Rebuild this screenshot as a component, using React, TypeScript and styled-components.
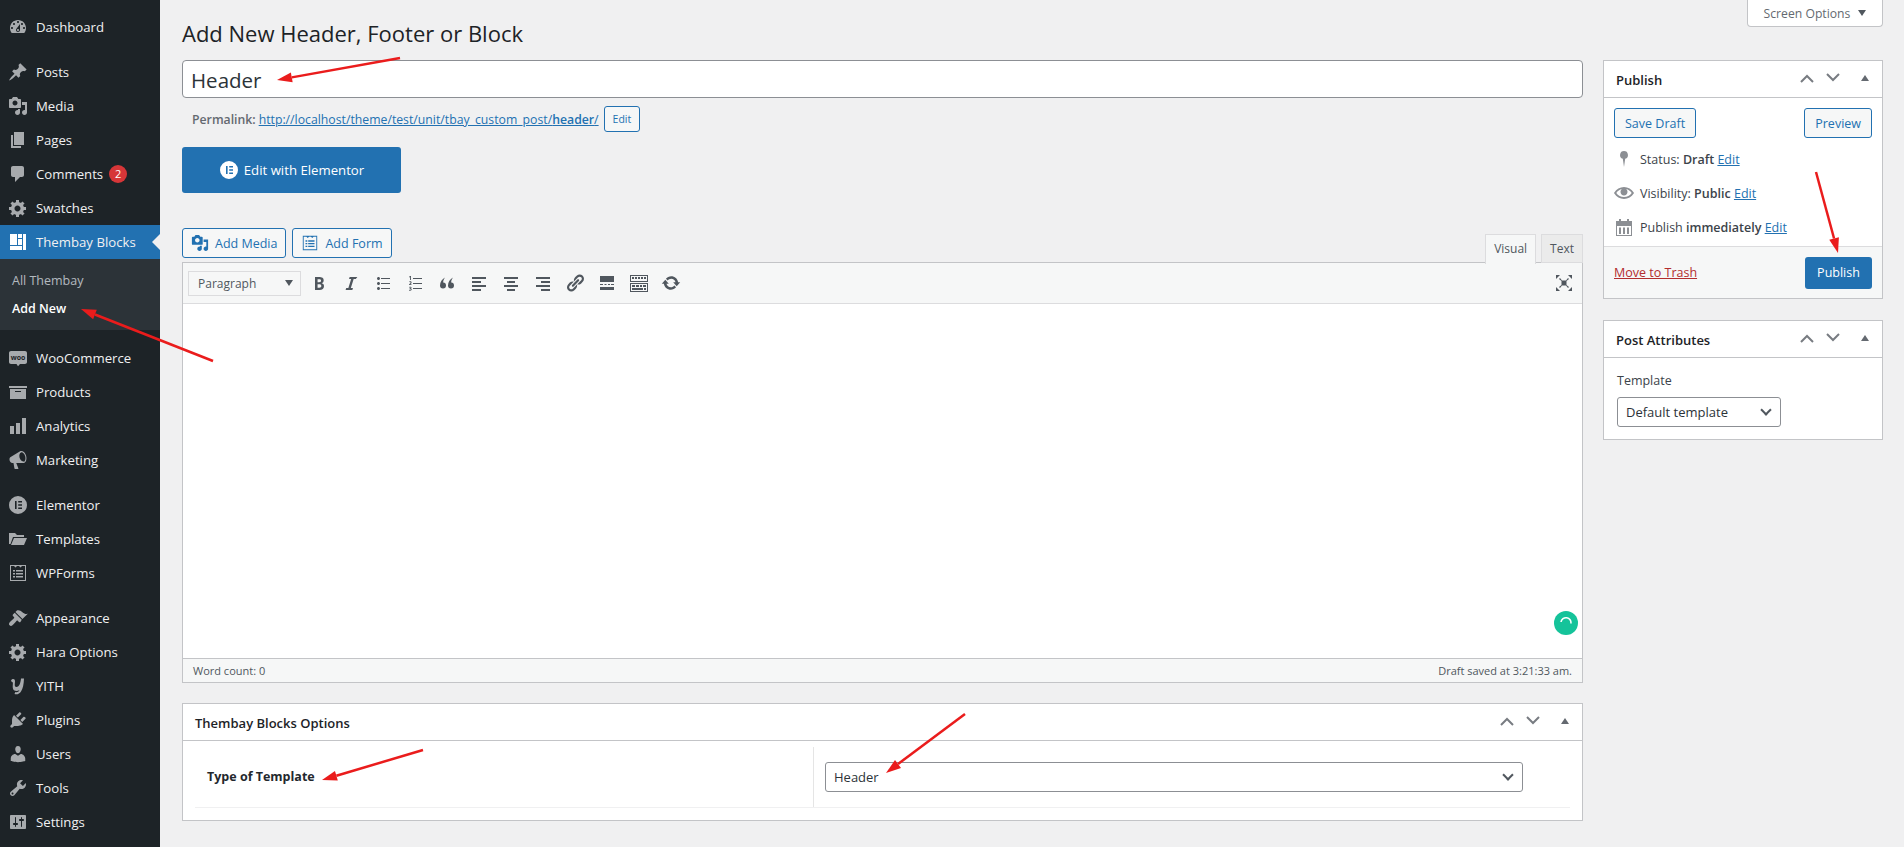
import React from 'react';
import styled, { createGlobalStyle } from 'styled-components';

const FONT = '"Open Sans", "Noto Sans", "Liberation Sans", sans-serif';

const GlobalStyle = createGlobalStyle`
  html, body {
    margin: 0;
    padding: 0;
    background: #f0f0f1;
    overflow: hidden;
  }
  body {
    font-family: ${FONT};
    font-size: 13px;
    color: #3c434a;
  }
  * {
    box-sizing: border-box;
  }
`;

const icons: Record<string, string> = {
  dashboard:
    'M3.76 16h12.48c1.1-1.37 1.76-3.11 1.76-5 0-4.42-3.58-8-8-8s-8 3.58-8 8c0 1.89.66 3.63 1.76 5zM10 4c.55 0 1 .45 1 1s-.45 1-1 1-1-.45-1-1 .45-1 1-1zM6 6c.55 0 1 .45 1 1s-.45 1-1 1-1-.45-1-1 .45-1 1-1zm8 0c.55 0 1 .45 1 1s-.45 1-1 1-1-.45-1-1 .45-1 1-1zm-5.37 5.55L12 7v6c0 1.1-.9 2-2 2s-2-.9-2-2c0-.57.24-1.08.63-1.45zM4 10c.55 0 1 .45 1 1s-.45 1-1 1-1-.45-1-1 .45-1 1-1zm12 0c.55 0 1 .45 1 1s-.45 1-1 1-1-.45-1-1 .45-1 1-1zm-5 3c0-.55-.45-1-1-1s-1 .45-1 1 .45 1 1 1 1-.45 1-1z',
  post: 'M10.44 3.02l1.82-1.82 6.36 6.35-1.83 1.82c-1.05-.68-2.48-.57-3.41.36l-.75.75c-.92.93-1.04 2.35-.35 3.41l-1.83 1.82-2.41-2.41-2.8 2.79c-.42.42-3.38 2.71-3.8 2.29s1.86-3.39 2.28-3.81l2.79-2.79L4.1 9.36l1.83-1.82c1.05.69 2.48.57 3.4-.36l.75-.75c.93-.92 1.05-2.35.36-3.41z',
  media:
    'M13 11V4c0-.55-.45-1-1-1h-1.67L9 1H5L3.67 3H2c-.55 0-1 .45-1 1v7c0 .55.45 1 1 1h10c.55 0 1-.45 1-1zM7 4.5c1.38 0 2.5 1.12 2.5 2.5S8.38 9.5 7 9.5 4.5 8.38 4.5 7 5.62 4.5 7 4.5zM14 6h5v10.5c0 1.38-1.12 2.5-2.5 2.5S14 17.88 14 16.5s1.12-2.5 2.5-2.5c.17 0 .34.02.5.05V9h-3V6zm-4 8.05V13h2v3.5c0 1.38-1.12 2.5-2.5 2.5S7 17.88 7 16.5 8.12 14 9.5 14c.17 0 .34.02.5.05z',
  page: 'M6 15V2h10v13H6zm-1 1h8v2H3V5h2v11z',
  comments: 'M5 2h9c1.1 0 2 .9 2 2v7c0 1.1-.9 2-2 2h-2l-5 5v-5H5c-1.1 0-2-.9-2-2V4c0-1.1.9-2 2-2z',
  generic:
    'M18 12h-2.18c-.17.7-.44 1.35-.81 1.93l1.54 1.54-2.1 2.1-1.54-1.54c-.58.36-1.23.63-1.91.79V19H8v-2.18c-.68-.16-1.33-.43-1.91-.79l-1.54 1.54-2.12-2.12 1.54-1.54c-.36-.58-.63-1.23-.79-1.91H1V9.03h2.17c.16-.7.44-1.35.8-1.94L2.43 5.55l2.1-2.1 1.54 1.54c.58-.37 1.24-.64 1.93-.81V2h3v2.18c.68.16 1.33.43 1.91.79l1.54-1.54 2.12 2.12-1.54 1.54c.36.59.64 1.24.8 1.94H18V12zm-8.5 1.5c1.66 0 3-1.34 3-3s-1.34-3-3-3-3 1.34-3 3 1.34 3 3 3z',
  blocks: 'M2 2h7v11H2zM10 2h4v4h-4zM10 7h4v6h-4zM15 2h3v16h-3zM2 14h12v4H2z',
  woo: 'M3 3h14c1.1 0 2 .9 2 2v9c0 1.1-.9 2-2 2h-5l-2 2.2L8.5 16H3c-1.1 0-2-.9-2-2V5c0-1.1.9-2 2-2z',
  archive: 'M19 4v2H1V4h18zM2 7h16v10H2V7zm11 3V9H7v1h6z',
  analytics: 'M18 18V2h-4v16h4zm-6 0V7H8v11h4zm-6 0v-8H2v8h4z',
  megaphone:
    'M18.15 5.94c.46 1.62.38 3.22-.02 4.48-.42 1.28-1.26 2.18-2.3 2.48-.16.06-.26.06-.4.06-.06.02-.12.02-.18.02-.06.02-.14.02-.22.02h-6.8l2.22 5.5c.02.14-.06.26-.14.34-.08.1-.24.16-.34.16H6.95c-.1 0-.26-.06-.34-.16-.08-.08-.16-.2-.14-.34l-1-5.5H4.25l-.02-.02c-.5.06-1.08-.18-1.54-.62s-.88-1.08-1.06-1.88c-.24-.8-.2-1.56-.02-2.2.18-.62.58-1.08 1.06-1.3l.02-.02 9-5.4c.1-.06.18-.1.24-.16.06-.04.14-.08.24-.12.16-.08.28-.12.5-.18 1.04-.3 2.24.1 3.22.98s1.84 2.24 2.26 3.86zm-2.58 5.98h-.02c.4-.1.74-.34 1.04-.7.58-.7.86-1.76.86-3.04-.02-.64-.1-1.3-.26-1.98-.34-1.2-.98-2.26-1.72-2.98-.76-.7-1.6-1.02-2.32-.82-.72.2-1.3.84-1.6 1.76-.3.88-.36 2.08-.02 3.3.34 1.24.98 2.26 1.74 2.98.76.7 1.6 1.02 2.3.88z',
  elementor:
    'M10 1a9 9 0 1 0 0 18 9 9 0 0 0 0-18zM7 6h1.6v8H7V6zm3.2 0H14v1.6h-3.8V6zm0 3.2H14v1.6h-3.8V9.2zm0 3.2H14V14h-3.8v-1.6z',
  folder: 'M1 4h6l2 2h7v2H5L2.5 15H1V4zm5 5h13l-3 7H3l3-7z',
  forms:
    'M2 2h16v16H2V2zm1 1v14h14V3h-3l-1.5 1.5L11 3H9L7.5 4.5 6 3H3zm2 4h2v1.5H5V7zm3 0h7v1.5H8V7zm-3 3h2v1.5H5V10zm3 0h7v1.5H8V10zm-3 3h2v1.5H5V13zm3 0h7v1.5H8V13z',
  appearance:
    'M14.48 11.06L7.41 3.99l1.5-1.5c.5-.56 2.3-.47 3.51.32 1.21.8 1.43 1.28 2.91 2.1 1.18.64 2.45 1.26 4.45.85zm-.71.71L6.7 4.7 4.93 6.47c-.39.39-.39 1.02 0 1.41l1.06 1.06c.39.39.39 1.03 0 1.42-.6.6-4.4 4.11-4.4 4.11-.78.78-.78 2.05 0 2.83.78.78 2.05.78 2.83 0 0 0 3.5-3.8 4.11-4.4.39-.39 1.03-.39 1.42 0l1.06 1.06c.39.39 1.02.39 1.41 0z',
  plugins:
    'M13.11 4.36L9.87 7.6 8 5.73l3.24-3.24c.35-.34 1.05-.2 1.56.32.52.51.66 1.21.31 1.55zm-8 1.77l.91-1.12 9.01 9.01-1.19.84c-.71.71-2.63 1.16-3.82 1.16H6.14L4.9 17.26c-.59.59-1.54.59-2.12 0-.59-.58-.59-1.53 0-2.12l1.24-1.24v-3.88c0-1.13.4-3.19 1.09-3.89zm7.26 3.97l3.24-3.24c.34-.35 1.04-.21 1.55.31.52.51.66 1.21.31 1.55l-3.24 3.25z',
  users:
    'M10 9.25c-2.27 0-2.73-3.44-2.73-3.44C7 4.02 7.82 2 9.97 2c2.16 0 2.98 2.02 2.71 3.81 0 0-.41 3.44-2.68 3.44zm0 2.57L12.72 10c2.39 0 4.52 2.33 4.52 4.53v2.49s-3.65 1.13-7.24 1.13c-3.65 0-7.24-1.13-7.24-1.13v-2.49c0-2.25 1.94-4.48 4.47-4.48z',
  tools:
    'M16.68 9.77c-1.34 1.34-3.3 1.67-4.95.99l-5.41 6.52c-.99.99-2.59.99-3.58 0s-.99-2.59 0-3.57l6.52-5.42c-.68-1.65-.35-3.61.99-4.95 1.28-1.28 3.12-1.62 4.72-1.06l-2.89 2.89 2.82 2.82 2.86-2.87c.53 1.58.18 3.39-1.08 4.65zM3.81 16.21c.4.39 1.04.39 1.43 0 .4-.4.4-1.04 0-1.43-.39-.4-1.03-.4-1.43 0-.39.39-.39 1.03 0 1.43z',
  settings:
    'M18 16V4c0-.55-.45-1-1-1H3c-.55 0-1 .45-1 1v12c0 .55.45 1 1 1h14c.55 0 1-.45 1-1zM8 11h1c.55 0 1 .45 1 1s-.45 1-1 1H8v1.5c0 .28-.22.5-.5.5s-.5-.22-.5-.5V13H6c-.55 0-1-.45-1-1s.45-1 1-1h1V5.5c0-.28.22-.5.5-.5s.5.22.5.5V11zm5-2h-1c-.55 0-1-.45-1-1s.45-1 1-1h1V5.5c0-.28.22-.5.5-.5s.5.22.5.5V7h1c.55 0 1 .45 1 1s-.45 1-1 1h-1v5.5c0 .28-.22.5-.5.5s-.5-.22-.5-.5V9z',
  pin: 'M10 2a4 4 0 0 0-1.2 7.8L10 18l1.2-8.2A4 4 0 0 0 10 2z',
  eye: 'M19.7 9.4C17.7 6 14 3.9 10 3.9S2.3 6 .3 9.4L0 10l.3.6c2 3.4 5.7 5.5 9.7 5.5s7.7-2.1 9.7-5.5l.3-.6-.3-.6zM10 14.1c-3.1 0-6-1.6-7.7-4.1C3.6 8 5.7 6.6 8 6.1c-.9.6-1.5 1.7-1.5 2.9 0 1.9 1.6 3.5 3.5 3.5s3.5-1.6 3.5-3.5c0-1.2-.6-2.3-1.5-2.9 2.3.5 4.4 1.9 5.7 3.9-1.7 2.5-4.6 4.1-7.7 4.1z',
  calendar:
    'M2 4h3V2h2v2h6V2h2v2h3v15H2V4zm1 5v9h14V9H3zm2 1.5h2V17H5v-6.5zm4 0h2V17H9v-6.5zm4 0h2V17h-2v-6.5z',
  bold: 'M6 4v13h4.54c1.37 0 2.46-.33 3.26-1 .8-.66 1.2-1.58 1.2-2.77 0-.84-.17-1.51-.51-2.01s-.9-.85-1.67-1.03v-.09c.57-.1 1.02-.4 1.36-.9s.51-1.13.51-1.91c0-1.14-.39-1.98-1.17-2.5C12.75 4.26 11.5 4 9.78 4H6zm2.57 5.15V6.26h1.36c.73 0 1.27.11 1.61.32.34.22.51.58.51 1.07 0 .54-.16.92-.47 1.15s-.82.35-1.51.35h-1.5zm0 2.19h1.6c1.44 0 2.16.53 2.16 1.61 0 .6-.17 1.05-.51 1.34s-.86.43-1.57.43H8.57v-3.38z',
  italic: 'M14.78 6h-2.13l-2.8 9h2.12l-.62 2H4.6l.62-2h2.14l2.8-9H8.03l.62-2h7.75z',
  ul: 'M5.5 7C4.67 7 4 6.33 4 5.5 4 4.68 4.67 4 5.5 4 6.32 4 7 4.68 7 5.5 7 6.33 6.32 7 5.5 7zM8 5h9v1H8V5zm-2.5 7c-.83 0-1.5-.67-1.5-1.5C4 9.68 4.67 9 5.5 9c.82 0 1.5.68 1.5 1.5 0 .83-.68 1.5-1.5 1.5zM8 10h9v1H8v-1zm-2.5 7c-.83 0-1.5-.67-1.5-1.5 0-.82.67-1.5 1.5-1.5.82 0 1.5.68 1.5 1.5 0 .83-.68 1.5-1.5 1.5zM8 15h9v1H8v-1z',
  ol: 'M6 7V3h-.69L4 3.8v.7l1.1-.6V7H6zm2-2h9v1H8V5zM6.5 12H4v-.6c1.2-1 1.6-1.5 1.6-1.9 0-.3-.2-.5-.6-.5-.3 0-.6.1-.9.3L4 8.7c.3-.2.8-.4 1.2-.4.9 0 1.4.5 1.4 1.1 0 .6-.5 1.2-1.3 1.9h1.2v.7zM8 10h9v1H8v-1zM4 16.6c.3.2.7.3 1 .3.4 0 .7-.2.7-.5 0-.4-.4-.5-.8-.5h-.3v-.6h.3c.3 0 .7-.1.7-.5 0-.2-.2-.4-.5-.4-.3 0-.6.1-.9.3l-.1-.7c.3-.2.8-.3 1.2-.3.8 0 1.2.4 1.2 1 0 .4-.2.7-.6.9.5.1.8.5.8 1 0 .7-.6 1.1-1.5 1.1-.4 0-.9-.1-1.2-.3zM8 15h9v1H8v-1z',
  quote:
    'M9 12.5a3 3 0 1 1-6 0c0-3.5 2-6.5 5-8-1.2 1.7-1.8 3-1.8 5A3 3 0 0 1 9 12.5zM17 12.5a3 3 0 1 1-6 0c0-3.5 2-6.5 5-8-1.2 1.7-1.8 3-1.8 5a3 3 0 0 1 2.8 3z',
  alignLeft: 'M3 4h14v2H3zM3 8h9v2H3zM3 12h14v2H3zM3 16h9v2H3z',
  alignCenter: 'M3 4h14v2H3zM6 8h8v2H6zM3 12h14v2H3zM6 16h8v2H6z',
  alignRight: 'M3 4h14v2H3zM8 8h9v2H8zM3 12h14v2H3zM8 16h9v2H8z',
  link: 'M17.74 2.76c1.68 1.69 1.68 4.41 0 6.1l-1.53 1.52c-1.12 1.12-2.7 1.47-4.14 1.09l2.62-2.61.76-.77.76-.76c.84-.84.84-2.2 0-3.04-.84-.85-2.2-.85-3.04 0l-.77.76-3.38 3.38c-.37-1.44-.02-3.02 1.1-4.14l1.52-1.53c1.69-1.68 4.42-1.68 6.1 0zM8.59 13.43l5.34-5.34c.42-.42.42-1.1 0-1.52-.44-.43-1.13-.39-1.53 0l-5.33 5.34c-.42.42-.42 1.1 0 1.52.44.43 1.13.39 1.52 0zm-.76 2.29l4.14-4.15c.38 1.44.03 3.02-1.09 4.14l-1.52 1.53c-1.69 1.68-4.41 1.68-6.1 0-1.68-1.68-1.68-4.42 0-6.1l1.53-1.52c1.12-1.12 2.7-1.47 4.14-1.1l-4.14 4.15c-.85.84-.85 2.2 0 3.05.84.84 2.2.84 3.04 0z',
  more: 'M3 3h14v6H3zM3 11h3v1H3zM7.5 11h2v1h-2zM11 11h2v1h-2zM14 11h3v1h-3zM3 14h14v3H3z',
  sink: 'M1 2h18v7H1V2zm1 1v5h16V3H2zm1 1h2v2H3zm3 0h2v2H6zm3 0h2v2H9zm3 0h2v2h-2zm3 0h2v2h-2zM1 10h18v9H1v-9zm1 1v7h16v-7H2zm1 1h3v2H3zm4 0h3v2H7zm4 0h2v2h-2zm3 0h3v2h-3zM3 15h11v2H3zm12 0h2v2h-2z',
  refresh:
    'M10.2 3.28c3.53 0 6.43 2.61 6.92 6h2.08l-3.5 4-3.5-4h2.32c-.45-1.97-2.21-3.45-4.32-3.45-1.45 0-2.73.71-3.54 1.78L4.95 5.66C6.23 4.2 8.11 3.28 10.2 3.28zm-.4 13.44c-3.52 0-6.43-2.61-6.92-6H.8l3.5-4c1.17 1.33 2.33 2.67 3.5 4H5.48c.45 1.97 2.21 3.45 4.32 3.45 1.45 0 2.73-.71 3.54-1.78l1.71 1.95c-1.28 1.46-3.15 2.38-5.25 2.38z',
  expand:
    'M2 2h4L2 6zM18 2h-4l4 4zM2 18h4l-4-4zM18 18h-4l4-4zM6 5l2 2.5h4L14 5l1 1-2.5 2v4l2.5 2-1 1-2-2.5H8L6 15l-1-1 2.5-2V8L5 6z',
  yith: 'M3 4.5C4.5 2.5 7 2.5 7 5.5c0 2-1 5.5 1.5 5.5 2.8 0 4-4 4.5-8.500h3c-.3 6-1 10-3 13-1.5 2.300-4 3.500-6.500 2.500l.8-2c1.800.8 3.300-.2 4.200-2-1 .7-2 1-3 1-3.500 0-4-3-3.700-6 .2-2 .2-3.300-1-3z',
};

interface NavEntry {
  label: string;
  icon: string;
  gap?: boolean;
  badge?: string;
  current?: boolean;
}

const navEntries: NavEntry[] = [
  { label: 'Dashboard', icon: 'dashboard' },
  { label: 'Posts', icon: 'post', gap: true },
  { label: 'Media', icon: 'media' },
  { label: 'Pages', icon: 'page' },
  { label: 'Comments', icon: 'comments', badge: '2' },
  { label: 'Swatches', icon: 'generic' },
  { label: 'Thembay Blocks', icon: 'blocks', current: true },
  { label: 'WooCommerce', icon: 'woo', gap: true },
  { label: 'Products', icon: 'archive' },
  { label: 'Analytics', icon: 'analytics' },
  { label: 'Marketing', icon: 'megaphone' },
  { label: 'Elementor', icon: 'elementor', gap: true },
  { label: 'Templates', icon: 'folder' },
  { label: 'WPForms', icon: 'forms' },
  { label: 'Appearance', icon: 'appearance', gap: true },
  { label: 'Hara Options', icon: 'generic' },
  { label: 'YITH', icon: 'yith' },
  { label: 'Plugins', icon: 'plugins' },
  { label: 'Users', icon: 'users' },
  { label: 'Tools', icon: 'tools' },
  { label: 'Settings', icon: 'settings' },
];

const toolbarIcons = ['bold', 'italic', 'ul', 'ol', 'quote', 'alignLeft', 'alignCenter', 'alignRight', 'link', 'more', 'sink', 'refresh'];

const Icon = ({ name, size = 20, className }: { name: string; size?: number; className?: string }) => (
  <svg className={className} width={size} height={size} viewBox="0 0 20 20" fill="currentColor" fillRule="evenodd" aria-hidden="true">
    <path d={icons[name]} />
  </svg>
);

const MenuIcon = ({ name }: { name: string }) => {
  if (name === 'woo') {
    return (
      <svg width={20} height={20} viewBox="0 0 20 20" aria-hidden="true">
        <path d={icons.woo} fill="currentColor" />
        <text x="10" y="11.5" textAnchor="middle" fontSize="7" fontWeight="700" fill="#1d2327" fontFamily={FONT}>
          woo
        </text>
      </svg>
    );
  }
  return <Icon name={name} />;
};

const HandleButtons = () => (
  <Handles>
    <svg width={16} height={12} viewBox="0 0 16 12" fill="none" stroke="currentColor" strokeWidth="2" aria-hidden="true">
      <path d="M2 10l6-6 6 6" />
    </svg>
    <svg width={16} height={12} viewBox="0 0 16 12" fill="none" stroke="currentColor" strokeWidth="2" aria-hidden="true">
      <path d="M2 2l6 6 6-6" />
    </svg>
    <HandleCaret />
  </Handles>
);

const RedArrow = ({ x1, y1, x2, y2 }: { x1: number; y1: number; x2: number; y2: number }) => {
  const angle = Math.atan2(y2 - y1, x2 - x1);
  const back = 15;
  const spread = 5;
  const bx = x2 - back * Math.cos(angle);
  const by = y2 - back * Math.sin(angle);
  const px = spread * Math.sin(angle);
  const py = spread * Math.cos(angle);
  return (
    <g>
      <line x1={x1} y1={y1} x2={bx} y2={by} stroke="#ea1c1c" strokeWidth="2.5" />
      <polygon points={`${x2},${y2} ${bx + px},${by - py} ${bx - px},${by + py}`} fill="#ea1c1c" />
    </g>
  );
};

export default function App() {
  return (
    <Page>
      <GlobalStyle />
      <Sidebar>
        {navEntries.map((entry) => (
          <React.Fragment key={entry.label}>
            <MenuItem $gap={entry.gap} $current={entry.current}>
              <MenuIconBox $current={entry.current}>
                <MenuIcon name={entry.icon} />
              </MenuIconBox>
              <span>{entry.label}</span>
              {entry.badge && <Badge>{entry.badge}</Badge>}
              {entry.current && <CurrentNotch />}
            </MenuItem>
            {entry.current && (
              <SubMenu>
                <SubItem>All Thembay</SubItem>
                <SubItem $active>Add New</SubItem>
              </SubMenu>
            )}
          </React.Fragment>
        ))}
      </Sidebar>

      <Main>
        <TopRow>
          <Title>Add New Header, Footer or Block</Title>
          <ScreenOptions>
            Screen Options <Caret />
          </ScreenOptions>
        </TopRow>

        <Columns>
          <EditorColumn>
            <TitleInput>Header</TitleInput>
            <PermalinkRow>
              <strong>Permalink:</strong>
              <TextLink href="#">
                http://localhost/theme/test/unit/tbay_custom_post/<b>header</b>/
              </TextLink>
              <OutlineButton $small>Edit</OutlineButton>
            </PermalinkRow>

            <ElementorButton>
              <Icon name="elementor" size={20} />
              Edit with Elementor
            </ElementorButton>

            <MediaRow>
              <MediaButtons>
                <OutlineButton>
                  <Icon name="media" size={18} />
                  Add Media
                </OutlineButton>
                <OutlineButton>
                  <Icon name="forms" size={18} />
                  Add Form
                </OutlineButton>
              </MediaButtons>
              <Tabs>
                <Tab $active>Visual</Tab>
                <Tab>Text</Tab>
              </Tabs>
            </MediaRow>

            <EditorBox>
              <Toolbar>
                <FormatSelect>
                  Paragraph
                  <Caret />
                </FormatSelect>
                <ToolIcons>
                  {toolbarIcons.map((name) => (
                    <ToolIcon key={name}>
                      <Icon name={name} />
                    </ToolIcon>
                  ))}
                </ToolIcons>
                <FullscreenIcon>
                  <Icon name="expand" />
                </FullscreenIcon>
              </Toolbar>
              <EditorArea>
                <Grammarly>
                  <svg width={14} height={14} viewBox="0 0 14 14" fill="none" stroke="#fff" strokeWidth="1.6" aria-hidden="true">
                    <path d="M2 6a5 5 0 0 1 10 1.500" />
                  </svg>
                </Grammarly>
              </EditorArea>
              <StatusBar>
                <span>Word count: 0</span>
                <span>Draft saved at 3:21:33 am.</span>
              </StatusBar>
            </EditorBox>

            <OptionsBox>
              <BoxHeader>
                <BoxTitle>Thembay Blocks Options</BoxTitle>
                <HandleButtons />
              </BoxHeader>
              <OptionsBody>
                <OptionsRow>
                  <OptionLabel>Type of Template</OptionLabel>
                  <OptionField>
                    <SelectBox $wide>
                      Header
                      <SelectChevron />
                    </SelectBox>
                  </OptionField>
                </OptionsRow>
              </OptionsBody>
            </OptionsBox>
          </EditorColumn>

          <SideColumn>
            <SideBox>
              <BoxHeader>
                <BoxTitle>Publish</BoxTitle>
                <HandleButtons />
              </BoxHeader>
              <DraftActions>
                <OutlineButton $tall>Save Draft</OutlineButton>
                <OutlineButton $tall>Preview</OutlineButton>
              </DraftActions>
              <MiscList>
                <MiscRow>
                  <Icon name="pin" />
                  <span>
                    Status: <b>Draft</b> <TextLink href="#">Edit</TextLink>
                  </span>
                </MiscRow>
                <MiscRow>
                  <Icon name="eye" />
                  <span>
                    Visibility: <b>Public</b> <TextLink href="#">Edit</TextLink>
                  </span>
                </MiscRow>
                <MiscRow>
                  <Icon name="calendar" />
                  <span>
                    Publish <b>immediately</b> <TextLink href="#">Edit</TextLink>
                  </span>
                </MiscRow>
              </MiscList>
              <PublishFooter>
                <TrashLink href="#">Move to Trash</TrashLink>
                <PublishButton>Publish</PublishButton>
              </PublishFooter>
            </SideBox>

            <SideBox>
              <BoxHeader>
                <BoxTitle>Post Attributes</BoxTitle>
                <HandleButtons />
              </BoxHeader>
              <AttributesBody>
                <AttributeLabel>Template</AttributeLabel>
                <SelectBox>
                  Default template
                  <SelectChevron />
                </SelectBox>
              </AttributesBody>
            </SideBox>
          </SideColumn>
        </Columns>
      </Main>

      <ArrowLayer width={1904} height={847} aria-hidden="true">
        <RedArrow x1={400} y1={58} x2={277} y2={80} />
        <RedArrow x1={213} y1={361} x2={81} y2={309} />
        <RedArrow x1={1816} y1={172} x2={1838} y2={253} />
        <RedArrow x1={423} y1={750} x2={322} y2={780} />
        <RedArrow x1={965} y1={714} x2={886} y2={773} />
      </ArrowLayer>
    </Page>
  );
}

const Page = styled.div`
  position: relative;
  display: flex;
  width: 1904px;
  height: 847px;
  overflow: hidden;
  background: #f0f0f1;
`;

const ArrowLayer = styled.svg`
  position: absolute;
  inset: 0;
  pointer-events: none;
`;

const Sidebar = styled.nav`
  flex: 0 0 160px;
  padding-top: 10px;
  background: #1d2327;
`;

const MenuItem = styled.div<{ $gap?: boolean; $current?: boolean }>`
  position: relative;
  display: flex;
  align-items: center;
  height: 34px;
  margin-top: ${(p) => (p.$gap ? '11px' : '0')};
  padding-right: 8px;
  font-size: 13.2px;
  color: #f0f0f1;
  background: ${(p) => (p.$current ? '#2271b1' : 'transparent')};
`;

const MenuIconBox = styled.span<{ $current?: boolean }>`
  flex: 0 0 36px;
  display: flex;
  justify-content: center;
  color: ${(p) => (p.$current ? '#fff' : '#a7aaad')};
`;

const Badge = styled.span`
  display: inline-block;
  width: 18px;
  height: 18px;
  margin-left: 6px;
  border-radius: 50%;
  font-size: 11px;
  line-height: 18px;
  text-align: center;
  color: #fff;
  background: #d63638;
`;

const CurrentNotch = styled.span`
  position: absolute;
  top: 50%;
  right: 0;
  margin-top: -8px;
  border: 8px solid transparent;
  border-right-color: #f0f0f1;
`;

const SubMenu = styled.div`
  height: 71px;
  padding: 8px 0;
  background: #2c3338;
`;

const SubItem = styled.div<{ $active?: boolean }>`
  height: 28px;
  padding-left: 12px;
  font-size: 12.5px;
  line-height: 28px;
  font-weight: ${(p) => (p.$active ? 600 : 400)};
  color: ${(p) => (p.$active ? '#fff' : 'rgba(240, 246, 252, 0.7)')};
`;

const Main = styled.main`
  flex: 1;
  padding: 0 21px 0 22px;
`;

const TopRow = styled.header`
  display: flex;
  justify-content: space-between;
  align-items: flex-start;
  height: 60px;
`;

const Title = styled.h1`
  margin: 17px 0 0;
  font-size: 22px;
  font-weight: 400;
  line-height: 32px;
  color: #1d2327;
`;

const ScreenOptions = styled.div`
  display: flex;
  align-items: center;
  justify-content: center;
  gap: 8px;
  width: 136px;
  height: 27px;
  border: 1px solid #c3c4c7;
  border-top: 0;
  border-radius: 0 0 4px 4px;
  font-size: 12.2px;
  color: #646970;
  background: #fff;
`;

const Caret = styled.span`
  border: 4px solid transparent;
  border-top: 6px solid #50575e;
  border-bottom: 0;
`;

const Columns = styled.div`
  display: flex;
  gap: 20px;
`;

const EditorColumn = styled.div`
  flex: 1;
  min-width: 0;
`;

const SideColumn = styled.aside`
  flex: 0 0 280px;
  display: flex;
  flex-direction: column;
  gap: 21px;
`;

const TitleInput = styled.div`
  height: 38px;
  padding-left: 8px;
  border: 1px solid #8c8f94;
  border-radius: 4px;
  font-size: 20.5px;
  line-height: 38px;
  color: #2c3338;
  background: #fff;
`;

const PermalinkRow = styled.div`
  display: flex;
  align-items: center;
  height: 26px;
  margin-top: 8px;
  padding-left: 10px;
  font-size: 12.25px;
  color: #646970;

  strong {
    font-weight: 600;
    margin-right: 3px;
  }
`;

const TextLink = styled.a`
  color: #2271b1;
  text-decoration: underline;

  b {
    font-weight: 600;
  }
`;

const OutlineButton = styled.div<{ $small?: boolean; $tall?: boolean }>`
  display: inline-flex;
  align-items: center;
  gap: 6px;
  height: ${(p) => (p.$small ? '26px' : '30px')};
  margin-left: ${(p) => (p.$small ? '5px' : '0')};
  padding: 0 ${(p) => (p.$small ? '8px' : p.$tall ? '10px' : '8px')};
  border: 1px solid #2271b1;
  border-radius: 3px;
  font-size: ${(p) => (p.$small ? '10.5px' : '12.5px')};
  color: #2271b1;
  background: #f6f7f7;
  white-space: nowrap;
`;

const ElementorButton = styled.div`
  display: flex;
  align-items: center;
  justify-content: center;
  gap: 5px;
  width: 219px;
  height: 46px;
  margin-top: 15px;
  border-radius: 3px;
  font-size: 13.2px;
  color: #fff;
  background: #2271b1;
`;

const MediaRow = styled.div`
  display: flex;
  justify-content: space-between;
  height: 35px;
  margin-top: 35px;
`;

const MediaButtons = styled.div`
  display: flex;
  gap: 6px;
  height: 30px;
`;

const Tabs = styled.div`
  display: flex;
  align-items: flex-end;
  gap: 5px;
`;

const Tab = styled.div<{ $active?: boolean }>`
  position: relative;
  z-index: 1;
  height: ${(p) => (p.$active ? '30px' : '29px')};
  margin-bottom: ${(p) => (p.$active ? '-1px' : '0')};
  padding: 0 8px;
  border: 1px solid #dcdcde;
  border-bottom-width: ${(p) => (p.$active ? '0' : '1px')};
  font-size: 12px;
  line-height: 28px;
  color: #50575e;
  background: ${(p) => (p.$active ? '#f6f7f7' : '#ebebeb')};
`;

const EditorBox = styled.section`
  margin-top: -1px;
  border: 1px solid #c3c4c7;
  background: #fff;
`;

const Toolbar = styled.div`
  display: flex;
  align-items: center;
  height: 41px;
  padding: 0 8px 0 5px;
  border-bottom: 1px solid #dcdcde;
  background: #f6f7f7;
`;

const FormatSelect = styled.div`
  display: flex;
  align-items: center;
  justify-content: space-between;
  width: 113px;
  height: 25px;
  padding: 0 7px 0 9px;
  border: 1px solid #dcdcde;
  font-size: 12px;
  color: #50575e;
  background: #f6f7f7;
`;

const ToolIcons = styled.div`
  display: flex;
  flex: 1;
  margin-left: 2px;
`;

const ToolIcon = styled.span`
  flex: 0 0 32px;
  display: flex;
  justify-content: center;
  color: #50575e;
`;

const FullscreenIcon = styled.span`
  display: flex;
  color: #50575e;
`;

const EditorArea = styled.div`
  position: relative;
  height: 354px;
`;

const Grammarly = styled.div`
  position: absolute;
  right: 4px;
  bottom: 23px;
  display: flex;
  align-items: center;
  justify-content: center;
  width: 24px;
  height: 24px;
  border-radius: 50%;
  background: #15c39a;
`;

const StatusBar = styled.div`
  display: flex;
  justify-content: space-between;
  align-items: center;
  height: 24px;
  padding: 0 10px;
  border-top: 1px solid #c3c4c7;
  font-size: 11px;
  color: #50575e;
  background: #f6f7f7;
`;

const OptionsBox = styled.section`
  height: 118px;
  margin-top: 20px;
  border: 1px solid #c3c4c7;
  background: #fff;
`;

const SideBox = styled.section`
  border: 1px solid #c3c4c7;
  background: #fff;
`;

const BoxHeader = styled.div`
  display: flex;
  justify-content: space-between;
  align-items: center;
  height: 37px;
  padding-left: 12px;
  border-bottom: 1px solid #c3c4c7;
`;

const BoxTitle = styled.h2`
  margin: 0;
  padding-top: 1px;
  font-size: 13px;
  font-weight: 600;
  color: #1d2327;
`;

const Handles = styled.div`
  display: flex;
  align-items: center;
  gap: 10px;
  margin-top: -2px;
  padding-right: 13px;
  color: #787c82;
`;

const HandleCaret = styled.span`
  margin-left: 10px;
  border: 4px solid transparent;
  border-top: 0;
  border-bottom: 6px solid #646970;
`;

const OptionsBody = styled.div`
  padding: 6px 12px 0;
`;

const OptionsRow = styled.div`
  display: grid;
  grid-template-columns: 618px 1fr;
  height: 61px;
  border-bottom: 1px solid #f0f0f1;
`;

const OptionLabel = styled.div`
  padding: 21px 0 0 12px;
  font-size: 12.5px;
  font-weight: 700;
  color: #23282d;
`;

const OptionField = styled.div`
  padding: 15px 0 0 11px;
  border-left: 1px solid #e5e5e5;
`;

const SelectBox = styled.div<{ $wide?: boolean }>`
  position: relative;
  display: flex;
  align-items: center;
  width: ${(p) => (p.$wide ? '698px' : '164px')};
  height: 30px;
  padding-left: 8px;
  border: 1px solid #8c8f94;
  border-radius: 3px;
  font-size: 13px;
  color: #2c3338;
  background: #fff;
`;

const SelectChevron = styled.span`
  position: absolute;
  top: 8px;
  right: 10px;
  width: 8px;
  height: 8px;
  border-right: 2px solid #50575e;
  border-bottom: 2px solid #50575e;
  transform: rotate(45deg);
`;

const DraftActions = styled.div`
  display: flex;
  justify-content: space-between;
  padding: 10px 10px 0;
`;

const MiscList = styled.div`
  padding-top: 4px;
`;

const MiscRow = styled.div`
  display: flex;
  align-items: center;
  gap: 6px;
  height: 34px;
  padding-left: 10px;
  font-size: 12.5px;
  color: #3c434a;

  svg {
    flex: 0 0 20px;
    color: #8c8f94;
  }

  b {
    font-weight: 600;
  }
`;

const PublishFooter = styled.div`
  display: flex;
  justify-content: space-between;
  align-items: center;
  height: 52px;
  margin-top: 2px;
  padding: 0 10px;
  border-top: 1px solid #dcdcde;
  background: #f6f7f7;
`;

const TrashLink = styled.a`
  font-size: 12.5px;
  color: #b32d2e;
  text-decoration: underline;
`;

const PublishButton = styled.div`
  display: flex;
  align-items: center;
  justify-content: center;
  width: 67px;
  height: 32px;
  border-radius: 3px;
  font-size: 12.5px;
  color: #fff;
  background: #2271b1;
`;

const AttributesBody = styled.div`
  height: 81px;
  padding: 14px 12px 0 13px;
`;

const AttributeLabel = styled.div`
  margin-bottom: 7px;
  font-size: 12.5px;
  line-height: 18px;
  color: #3c434a;
`;
